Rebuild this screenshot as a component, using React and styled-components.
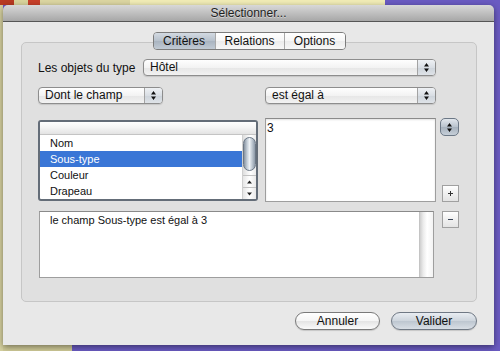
import styled, { createGlobalStyle } from 'styled-components'

const GlobalStyle = createGlobalStyle`
  html, body {
    margin: 0;
    padding: 0;
  }
  body {
    width: 500px;
    height: 351px;
    overflow: hidden;
    font-family: "Liberation Sans", Arial, sans-serif;
    font-size: 12px;
    color: #111;
    background:
      linear-gradient(to right, #b83a22 0 14px, #d9d49c 14px 28px, #c8402a 28px 40px, #dcd6a2 40px 130px, #f1ecb6 130px 385px, transparent 385px) left top / 100% 5px no-repeat,
      linear-gradient(#d6d1a0, #d6d1a0) left top / 3px 100% no-repeat,
      linear-gradient(to right, #d0cb98 0 72px, transparent 72px) left bottom / 100% 6px no-repeat,
      #6a5bc2;
  }
`

const Root = styled.div`
  box-sizing: border-box;
  width: 500px;
  height: 351px;
  padding: 5px 6px 6px 3px;
`

const Window = styled.div`
  display: flex;
  flex-direction: column;
  height: 100%;
  border-radius: 5px 5px 0 0;
  overflow: hidden;
  box-shadow: 0 2px 6px rgba(0, 0, 0, 0.45);
`

const TitleBar = styled.div`
  height: 16px;
  border-bottom: 1px solid #565656;
  display: flex;
  align-items: center;
  justify-content: center;
  background: linear-gradient(#d8d8d8, #a7a7a7);
  color: #1f1f1f;
  text-shadow: 0 1px 0 rgba(255, 255, 255, 0.45);
`

const Body = styled.div`
  flex: 1;
  display: flex;
  flex-direction: column;
  background: #e8e8e8;
  padding: 10px 17px 0 18px;
`

const TabStrip = styled.div`
  position: relative;
  z-index: 1;
  display: flex;
  justify-content: center;
  margin-bottom: -8px;
`

const Segmented = styled.div`
  display: flex;
  height: 18px;
  box-sizing: border-box;
  border: 1px solid #7c7c7c;
  border-radius: 4px;
  overflow: hidden;
`

const Tab = styled.div`
  box-sizing: border-box;
  width: ${p => p.$w}px;
  display: flex;
  align-items: center;
  justify-content: center;
  & + & {
    border-left: 1px solid #a9a9a9;
  }
  background: ${p => p.$active
    ? 'linear-gradient(#d3dae2, #b6c0cb 50%, #a9b4c0 51%, #c1cad4)'
    : 'linear-gradient(#ffffff, #f6f6f6 50%, #ececec 51%, #f7f7f7)'};
`

const GroupBox = styled.div`
  border: 1px solid #c6c6c6;
  border-radius: 5px;
  background: #e0e0e0;
  padding: 16px 17px 23px 16px;
`

const Row = styled.div`
  display: flex;
  align-items: ${p => p.$align || 'center'};
  justify-content: ${p => p.$justify || 'flex-start'};
  margin-top: ${p => p.$mt || 0}px;
  padding-right: ${p => p.$pr || 0}px;
`

const Label = styled.div`
  width: 105px;
  white-space: nowrap;
`

const Popup = styled.div`
  box-sizing: border-box;
  width: ${p => p.$w}px;
  height: 17px;
  display: flex;
  border: 1px solid #8d8d8d;
  border-radius: 4px;
  overflow: hidden;
  background: linear-gradient(#fefefe, #f3f3f3 50%, #e6e6e6 51%, #f2f2f2);
  box-shadow: 0 1px 1px rgba(0, 0, 0, 0.12);
`

const PopupText = styled.div`
  flex: 1;
  padding-left: 6px;
  line-height: 15px;
  white-space: nowrap;
`

const PopupArrows = styled.div`
  width: 17px;
  border-left: 1px solid #a3a3a3;
  display: flex;
  align-items: center;
  justify-content: center;
  background: linear-gradient(#eef1f4, #d9dee4 50%, #ccd3da 51%, #dfe3e8);
`

const ListBox = styled.div`
  box-sizing: border-box;
  width: 220px;
  height: 81px;
  margin: 2px 7px 0 0;
  border: 2px solid #646d78;
  border-radius: 3px;
  background: #fff;
  display: flex;
  flex-direction: column;
  overflow: hidden;
`

const ListHeader = styled.div`
  height: 12px;
  border-bottom: 1px solid #c4c4c4;
  background: linear-gradient(#ffffff, #f5f5f5 45%, #e3e3e3);
`

const ListBody = styled.div`
  flex: 1;
  display: flex;
`

const ListRows = styled.div`
  flex: 1;
`

const ListRow = styled.div`
  height: 16px;
  line-height: 16px;
  padding-left: 10px;
  font-size: 11px;
  background: ${p => (p.$selected ? '#3a76d6' : 'transparent')};
  color: ${p => (p.$selected ? '#fff' : '#111')};
`

const ScrollBar = styled.div`
  box-sizing: border-box;
  width: 14px;
  display: flex;
  flex-direction: column;
  border-left: 1px solid #cfcfcf;
  background: linear-gradient(to right, #dedede, #f6f6f6 40%, #ffffff 60%, #ebebeb);
`

const ScrollTrack = styled.div`
  flex: 1;
  padding: 2px 0 0 0;
`

const Thumb = styled.div`
  height: 34px;
  box-sizing: border-box;
  border: 1px solid #6b7785;
  border-radius: 7px;
  background: linear-gradient(to right, #8793a1, #c8d1da 30%, #eef2f6 50%, #bcc6d0 75%, #8d99a7);
`

const ScrollArrow = styled.div`
  height: 12px;
  box-sizing: border-box;
  border-top: 1px solid #c2c2c2;
  display: flex;
  align-items: center;
  justify-content: center;
  background: linear-gradient(to right, #e6e6e6, #ffffff 50%, #e9e9e9);
`

const ValueArea = styled.div`
  box-sizing: border-box;
  width: 171px;
  height: 84px;
  border: 1px solid #9e9e9e;
  border-top-color: #8a8a8a;
  background: #fff;
  box-shadow: inset 0 1px 2px rgba(0, 0, 0, 0.12);
  padding: 2px 1px;
  line-height: 14px;
`

const SideColumn = styled.div`
  width: 19px;
  height: 84px;
  margin-left: 4px;
  display: flex;
  flex-direction: column;
  justify-content: space-between;
  align-items: flex-end;
`

const Stepper = styled.div`
  box-sizing: border-box;
  width: 19px;
  height: 18px;
  border: 1px solid #6c7886;
  border-radius: 5px;
  display: flex;
  align-items: center;
  justify-content: center;
  background: linear-gradient(#e2e7ed, #b8c2cd 50%, #a6b1bd 51%, #c6cfd8);
`

const SmallButton = styled.div`
  box-sizing: border-box;
  width: 17px;
  height: 17px;
  margin-left: ${p => p.$ml || 0}px;
  border: 1px solid #a0a0a0;
  display: flex;
  align-items: center;
  justify-content: center;
  background: linear-gradient(#ffffff, #f0f0f0 50%, #e4e4e4);
`

const ResultArea = styled.div`
  box-sizing: border-box;
  width: 395px;
  height: 67px;
  margin-left: 1px;
  border: 1px solid #9e9e9e;
  border-top-color: #8a8a8a;
  background: #fff;
  display: flex;
`

const ResultText = styled.div`
  flex: 1;
  padding: 2px 0 0 10px;
  font-size: 11px;
  line-height: 13px;
`

const ResultScroll = styled.div`
  width: 13px;
  border-left: 1px solid #c4c4c4;
  background: linear-gradient(to right, #cfcfcf, #ebebeb 25%, #ffffff 55%, #f3f3f3);
`

const Footer = styled.div`
  display: flex;
  justify-content: flex-end;
  gap: 11px;
  margin-top: 10px;
`

const PushButton = styled.div`
  box-sizing: border-box;
  width: ${p => p.$w}px;
  height: 18px;
  border-radius: 9px;
  border: 1px solid ${p => (p.$default ? '#6f7884' : '#7a7a7a')};
  display: flex;
  align-items: center;
  justify-content: center;
  box-shadow: 0 1px 1px rgba(0, 0, 0, 0.15);
  background: ${p => p.$default
    ? 'linear-gradient(#e9edf2, #cdd4dc 50%, #bdc6d0 51%, #d8dee5)'
    : 'linear-gradient(#ffffff, #f5f5f5 50%, #e4e4e4 51%, #fafafa)'};
`

const UpDown = ({ color = '#111' }) => (
  <svg width="5" height="9" viewBox="0 0 5 9">
    <path d="M2.5 0 L5 3.5 H0 Z M0 5.5 H5 L2.5 9 Z" fill={color} />
  </svg>
)

const Triangle = ({ down }) => (
  <svg width="5" height="4" viewBox="0 0 5 4">
    <path d={down ? 'M0 0.5 H5 L2.5 3.5 Z' : 'M2.5 0.5 L5 3.5 H0 Z'} fill="#222" />
  </svg>
)

const Plus = () => (
  <svg width="5" height="5" viewBox="0 0 5 5">
    <path d="M2.5 0 V5 M0 2.5 H5" stroke="#333" strokeWidth="1" />
  </svg>
)

const Minus = () => (
  <svg width="5" height="3" viewBox="0 0 5 3">
    <path d="M0 1.5 H5" stroke="#3a4658" strokeWidth="1.2" />
  </svg>
)

const fields = ['Nom', 'Sous-type', 'Couleur', 'Drapeau']

function App() {
  return (
    <Root>
      <GlobalStyle />
      <Window>
        <TitleBar>Sélectionner...</TitleBar>
        <Body>
          <TabStrip>
            <Segmented>
              <Tab $w={61} $active>Critères</Tab>
              <Tab $w={69}>Relations</Tab>
              <Tab $w={61}>Options</Tab>
            </Segmented>
          </TabStrip>
          <GroupBox>
            <Row $pr={23}>
              <Label>Les objets du type</Label>
              <Popup $w={293}>
                <PopupText>Hôtel</PopupText>
                <PopupArrows><UpDown /></PopupArrows>
              </Popup>
            </Row>
            <Row $mt={11} $pr={23} $justify="space-between">
              <Popup $w={125}>
                <PopupText>Dont le champ</PopupText>
                <PopupArrows><UpDown /></PopupArrows>
              </Popup>
              <Popup $w={171}>
                <PopupText>est égal à</PopupText>
                <PopupArrows><UpDown /></PopupArrows>
              </Popup>
            </Row>
            <Row $mt={14} $align="flex-start">
              <ListBox>
                <ListHeader />
                <ListBody>
                  <ListRows>
                    {fields.map(f => (
                      <ListRow key={f} $selected={f === 'Sous-type'}>{f}</ListRow>
                    ))}
                  </ListRows>
                  <ScrollBar>
                    <ScrollTrack><Thumb /></ScrollTrack>
                    <ScrollArrow><Triangle /></ScrollArrow>
                    <ScrollArrow><Triangle down /></ScrollArrow>
                  </ScrollBar>
                </ListBody>
              </ListBox>
              <ValueArea>3</ValueArea>
              <SideColumn>
                <Stepper><UpDown /></Stepper>
                <SmallButton><Plus /></SmallButton>
              </SideColumn>
            </Row>
            <Row $mt={9} $align="flex-start">
              <ResultArea>
                <ResultText>le champ Sous-type est égal à 3</ResultText>
                <ResultScroll />
              </ResultArea>
              <SmallButton $ml={8}><Minus /></SmallButton>
            </Row>
          </GroupBox>
          <Footer>
            <PushButton $w={85}>Annuler</PushButton>
            <PushButton $w={86} $default>Valider</PushButton>
          </Footer>
        </Body>
      </Window>
    </Root>
  )
}

export default App
